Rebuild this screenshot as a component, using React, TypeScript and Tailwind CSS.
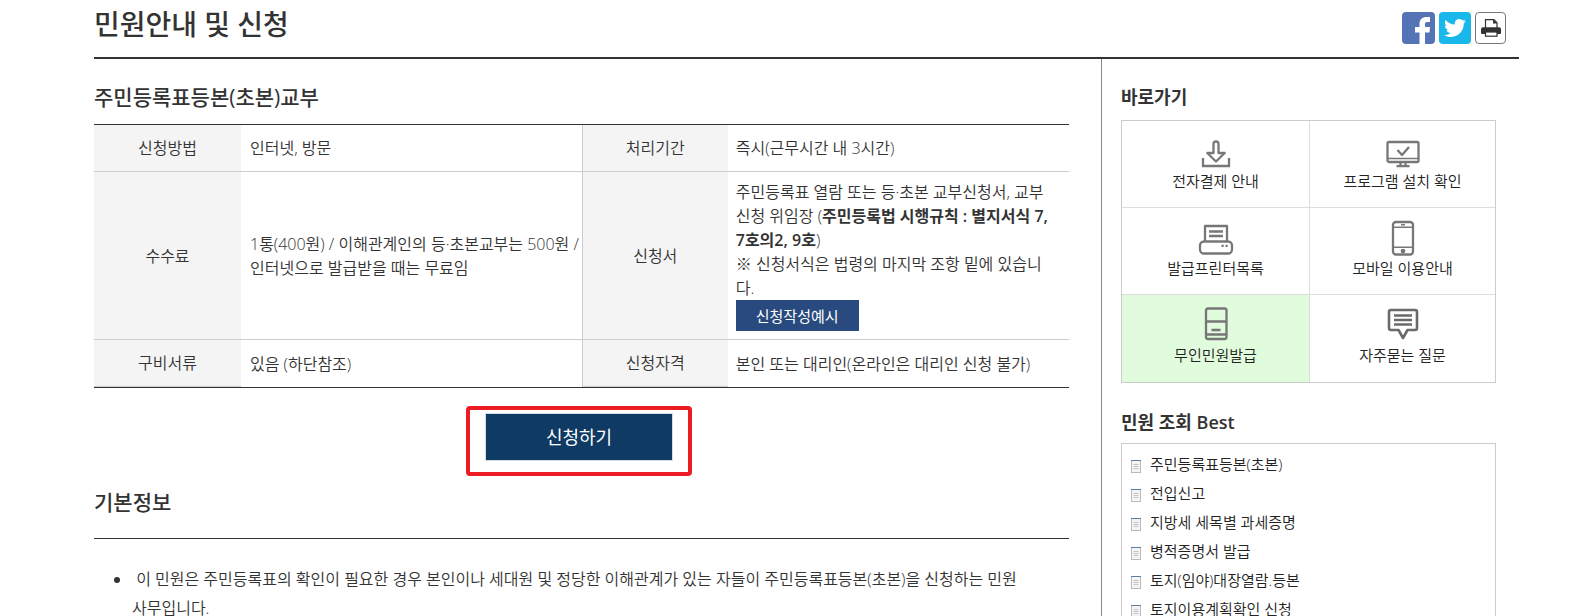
import type { ReactNode } from "react";
import { FaTwitter } from "react-icons/fa";

function MenuIcon({ children }: { children: ReactNode }) {
  return (
    <svg
      viewBox="0 0 36 36"
      className="h-9 w-9"
      fill="none"
      stroke="#777"
      strokeWidth="2.3"
      strokeLinejoin="round"
      aria-hidden="true"
    >
      {children}
    </svg>
  );
}

const shortcuts = [
  {
    title: "전자결제 안내",
    icon: (
      <MenuIcon>
        <path d="M5 25v8h26v-8" strokeLinejoin="miter" />
        <path d="M15.5 20V11a2.5 2.5 0 0 1 5 0v9h6.200L18 28.500l-8.700-8.500z" />
      </MenuIcon>
    ),
  },
  {
    title: "프로그램 설치 확인",
    icon: (
      <MenuIcon>
        <rect x="2.5" y="9" width="31" height="20" rx="1.5" />
        <path d="M3 25.500h30" strokeWidth="1.5" />
        <path d="M12.500 17l4.500 5 7-8" />
        <path d="M15.500 29v4M20.500 29v4M11.500 33.200h13" />
      </MenuIcon>
    ),
  },
  {
    title: "발급프린터목록",
    icon: (
      <MenuIcon>
        <path d="M7 21V6h22v15" />
        <path d="M11 11.500h14M11 16h14" />
        <rect x="2" y="21.5" width="32" height="12" rx="4" fill="#fff" />
        <path d="M23.500 25.800h2.200M27.500 25.800h2.200" />
      </MenuIcon>
    ),
  },
  {
    title: "모바일 이용안내",
    icon: (
      <MenuIcon>
        <rect x="8" y="2" width="20" height="32.5" rx="3" />
        <path d="M8 7.200h20M8 27.200h20" strokeWidth="1.5" />
        <path d="M16 4.800h4" strokeWidth="1.5" />
        <circle cx="18" cy="31" r="1.2" />
      </MenuIcon>
    ),
  },
  {
    title: "무인민원발급",
    active: true,
    icon: (
      <MenuIcon>
        <rect x="8" y="1.5" width="20.5" height="30.5" rx="2" />
        <path d="M8 14.500h20M8 27.500h20M13.500 23h9" />
      </MenuIcon>
    ),
  },
  {
    title: "자주묻는 질문",
    icon: (
      <MenuIcon>
        <path
          d="M6 3h24a2 2 0 0 1 2 2v16a2 2 0 0 1-2 2h-7.500L18 31l-4.500-8H6a2 2 0 0 1-2-2V5a2 2 0 0 1 2-2z"
          stroke="#6a6a6a"
          strokeWidth="2.6"
        />
        <path d="M9 8.500h18M9 13h18M9 17.500h18" stroke="#6a6a6a" />
      </MenuIcon>
    ),
  },
];

const bestList = [
  "주민등록표등본(초본)",
  "전입신고",
  "지방세 세목별 과세증명",
  "병적증명서 발급",
  "토지(임야)대장열람.등본",
  "토지이용계획확인 신청",
];

function FacebookIcon() {
  return (
    <svg viewBox="0 0 33 32" className="h-8 w-[33px]" fill="#fff" aria-hidden="true">
      <path d="M17.500 32V20.500h-4.500V15h4.500v-3c0-4.800 2.800-7 7.200-7H28v5h-2.500c-1.800 0-2.500.800-2.500 2.300V15h5l-.500 5.500H23V32z" />
    </svg>
  );
}

function PrintIcon() {
  return (
    <svg viewBox="0 0 20 18" className="h-[18px] w-5" fill="none" stroke="#333" aria-hidden="true">
      <path d="M4.500 9V.7h8.500l3 3V9" strokeWidth="1.2" />
      <path d="M12 .5v4h4.500z" fill="#333" stroke="none" />
      <path
        d="M2 8.300h16a2 2 0 0 1 2 2V14a1 1 0 0 1-1 1H1a1 1 0 0 1-1-1v-3.700a2 2 0 0 1 2-2z"
        fill="#333"
        stroke="none"
      />
      <rect x="4.5" y="13" width="11.5" height="4.200" fill="#fff" strokeWidth="1.2" />
    </svg>
  );
}

function ListIcon() {
  return (
    <svg viewBox="0 0 10 13" className="mt-1 h-[13px] w-[10px] shrink-0" aria-hidden="true">
      <rect x="0.5" y="0.5" width="9" height="12" fill="#f4f4f4" stroke="#bbb" />
      <path d="M0 .5h10" stroke="#5f7f9f" />
      <path d="M2.500 4.500h5M2.500 6.500h5M2.500 8.500h5" stroke="#c4c4c4" />
    </svg>
  );
}

function Th({ children }: { children: ReactNode }) {
  return (
    <th
      scope="row"
      className="border-b border-[#ccc] bg-[#f4f4f4] px-2 py-[11px] text-center font-[350]"
    >
      {children}
    </th>
  );
}

function Header() {
  return (
    <header className="flex items-start justify-between border-b-2 border-[#333] pr-[13px]">
      <h1 className="pt-1 pb-[13px] text-[28px] leading-10 font-medium">민원안내 및 신청</h1>
      <div className="flex gap-1 pt-3">
        <button
          type="button"
          aria-label="페이스북"
          className="h-8 w-[33px] overflow-hidden rounded bg-[#5474b6]"
        >
          <FacebookIcon />
        </button>
        <button
          type="button"
          aria-label="트위터"
          className="flex h-8 w-8 items-center justify-center rounded bg-[#1ab7ea] text-white"
        >
          <FaTwitter className="h-[22px] w-[22px]" />
        </button>
        <button
          type="button"
          aria-label="인쇄"
          className="flex h-8 w-[31px] items-center justify-center rounded border border-[#777] bg-white"
        >
          <PrintIcon />
        </button>
      </div>
    </header>
  );
}

function Detail() {
  return (
    <main className="min-w-0 flex-1 pt-[22px] pr-8">
      <h2 className="mb-[11px] text-[21px] leading-8 font-medium">주민등록표등본(초본)교부</h2>
      <table className="w-full table-fixed border-separate border-spacing-0 border-y border-[#333] leading-6">
        <colgroup>
          <col className="w-[147px]" />
          <col />
          <col className="w-[145px]" />
          <col className="w-[35%]" />
        </colgroup>
        <tbody>
          <tr>
            <Th>신청방법</Th>
            <td className="border-r border-b border-[#ccc] pl-[9px]">인터넷, 방문</td>
            <Th>처리기간</Th>
            <td className="border-b border-[#ccc] pl-2">즉시(근무시간 내 3시간)</td>
          </tr>
          <tr>
            <Th>수수료</Th>
            <td className="border-r border-b border-[#ccc] pl-[9px] whitespace-nowrap">
              1통(400원) / 이해관계인의 등·초본교부는 500원 /<br />
              인터넷으로 발급받을 때는 무료임
            </td>
            <Th>신청서</Th>
            <td className="border-b border-[#ccc] py-2 pl-2 whitespace-nowrap">
              <p>
                주민등록표 열람 또는 등·초본 교부신청서, 교부
                <br />
                신청 위임장 (
                <strong className="font-semibold">
                  주민등록법 시행규칙 : 별지서식 7,
                  <br />
                  7호의2, 9호
                </strong>
                )
                <br />※ 신청서식은 법령의 마지막 조항 밑에 있습니
                <br />
                다.
              </p>
              <button
                type="button"
                className="block h-[31px] bg-[#284a7e] px-5 text-[15px] font-normal text-white"
              >
                신청작성예시
              </button>
            </td>
          </tr>
          <tr>
            <Th>구비서류</Th>
            <td className="border-r border-[#ccc] pl-[9px]">있음 (하단참조)</td>
            <Th>신청자격</Th>
            <td className="pl-2">본인 또는 대리인(온라인은 대리인 신청 불가)</td>
          </tr>
        </tbody>
      </table>

      <div className="mt-[18px] flex justify-center pr-[5px]">
        <div className="rounded-sm border-4 border-[#ed1c24] px-[15px] pt-[3px] pb-[11px]">
          <button
            type="button"
            className="h-12 w-[188px] border border-[#d5dce3] bg-[#0f3a63] text-lg font-normal text-white"
          >
            신청하기
          </button>
        </div>
      </div>

      <h2 className="mt-[10px] border-b border-[#333] pb-5 text-[21px] leading-8 font-medium">
        기본정보
      </h2>
      <ul className="list-disc pt-[26px] pr-8 pl-[38px] leading-[29px]">
        <li>
          &nbsp;이 민원은 주민등록표의 확인이 필요한 경우 본인이나 세대원 및 정당한 이해관계가 있는
          자들이 주민등록표등본(초본)을 신청하는 민원
          <br />
          사무입니다.
        </li>
      </ul>
    </main>
  );
}

function Sidebar() {
  return (
    <aside className="w-[418px] shrink-0 border-l border-[#888] pt-[22px] pr-[23px] pl-[19px]">
      <h2 className="mb-[7px] text-lg leading-8 font-semibold">바로가기</h2>
      <nav className="grid grid-cols-[188px_1fr] border border-[#ccc] text-[15px] leading-6 text-[#222]">
        {shortcuts.map((s, i) => (
          <a
            key={s.title}
            href="#"
            className={`flex h-[87px] flex-col items-center border-[#ddd] pt-3 ${
              i % 2 === 0 ? "border-r" : ""
            } ${i < 4 ? "border-b" : ""} ${s.active ? "bg-[#e1fbdd]" : ""}`}
          >
            {s.icon}
            {s.title}
          </a>
        ))}
      </nav>

      <h2 className="mt-[23px] mb-[5px] text-lg leading-8 font-semibold">민원 조회 Best</h2>
      <ul className="border border-[#ccc] px-[9px] py-[6px] text-[15px] leading-[29px] text-[#222]">
        {bestList.map((title) => (
          <li key={title}>
            <a href="#" className="flex items-center gap-[9px]">
              <ListIcon />
              {title}
            </a>
          </li>
        ))}
      </ul>
    </aside>
  );
}

export default function App() {
  return (
    <div className="h-screen overflow-hidden bg-white pr-[67px] pl-[94px] font-['Open_Sans','Noto_Sans_CJK_KR',sans-serif] text-base font-[350] text-[#333]">
      <Header />
      <div className="flex">
        <Detail />
        <Sidebar />
      </div>
    </div>
  );
}
